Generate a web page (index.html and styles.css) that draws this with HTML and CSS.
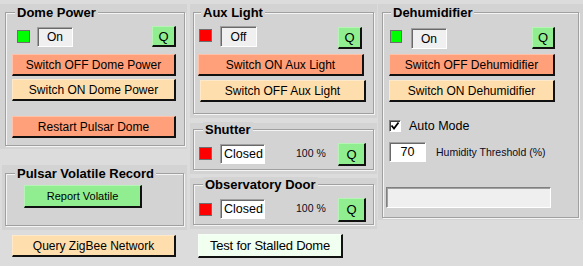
FILE: index.html
```html
<!DOCTYPE html>
<html lang="en">
<head>
    <meta charset="UTF-8">
    <title>Dome Control</title>
    <link rel="stylesheet" href="styles.css">
</head>
<body>
    <div class="form">

        <!-- coluna 1 -->
        <div class="col col-1">
            <div class="panel p-dome">
                <div class="group g-dome">
                    <span class="title">Dome Power</span>
                    <div class="row">
                        <span class="led on"></span>
                        <span class="status">On</span>
                        <button class="btn green q">Q</button>
                    </div>
                    <button class="btn salmon b1">Switch OFF Dome Power</button>
                    <button class="btn navajo b2">Switch ON Dome Power</button>
                    <button class="btn salmon b3">Restart Pulsar Dome</button>
                </div>
            </div>
            <div class="panel p-pulsar">
                <div class="group g-pulsar">
                    <span class="title">Pulsar Volatile Record</span>
                    <button class="btn green report">Report Volatile</button>
                </div>
            </div>
            <button class="btn navajo query">Query ZigBee Network</button>
        </div>

        <!-- coluna 2 -->
        <div class="col col-2">
            <div class="panel p-aux">
                <div class="group g-aux">
                    <span class="title">Aux Light</span>
                    <div class="row">
                        <span class="led off"></span>
                        <span class="status">Off</span>
                        <button class="btn green q">Q</button>
                    </div>
                    <button class="btn salmon b1">Switch ON Aux Light</button>
                    <button class="btn navajo b2">Switch OFF Aux Light</button>
                </div>
            </div>
            <div class="panel p-small">
                <div class="group g-small g-shutter">
                    <span class="title">Shutter</span>
                    <div class="row">
                        <span class="led off"></span>
                        <span class="status closed">Closed</span>
                        <span class="pct">100 %</span>
                        <button class="btn green q">Q</button>
                    </div>
                </div>
            </div>
            <div class="panel p-small p-door">
                <div class="group g-small g-door">
                    <span class="title">Observatory Door</span>
                    <div class="row">
                        <span class="led off"></span>
                        <span class="status closed">Closed</span>
                        <span class="pct">100 %</span>
                        <button class="btn green q">Q</button>
                    </div>
                </div>
            </div>
            <button class="btn honeydew stalled">Test for Stalled Dome</button>
        </div>

        <!-- coluna 3 -->
        <div class="col col-3">
            <div class="panel p-dehum">
                <div class="group g-dehum">
                    <span class="title">Dehumidifier</span>
                    <div class="row">
                        <span class="led on"></span>
                        <span class="status">On</span>
                        <button class="btn green q">Q</button>
                    </div>
                    <button class="btn salmon b1">Switch OFF Dehumidifier</button>
                    <button class="btn navajo b2">Switch ON Dehumidifier</button>
                    <label class="check-row">
                        <span class="checkbox">
                            <svg width="10" height="10" viewBox="0 0 10 10"><polyline points="1.5,4.5 4,7.5 8.5,1.5" fill="none" stroke="#000" stroke-width="1.8"/></svg>
                        </span>
                        Auto Mode
                    </label>
                    <div class="threshold-row">
                        <span class="status num">70</span>
                        <span class="small-label">Humidity Threshold (%)</span>
                    </div>
                    <div class="progress"></div>
                </div>
            </div>
        </div>

    </div>
</body>
</html>
```

FILE: styles.css
```css
/* --- form base --- */
body {
    margin: 0;
    background-color: #dcdcdc;
    font-family: "Liberation Sans", Arial, sans-serif;
    font-size: 12px;
    color: #000;
}

.form {
    display: flex;
    width: 583px;
    height: 266px;
    overflow: hidden;
}

.col {
    display: flex;
    flex-direction: column;
    align-items: flex-start;
    padding-top: 4px;
}

.col-1 { width: 187px; }
.col-2 { width: 187px; margin-left: 3px; }
.col-3 { width: 205px; margin-left: 1px; }

.panel {
    background-color: #d3d3d3;
    box-sizing: border-box;
}

/* groupbox */
.group {
    position: relative;
    box-sizing: border-box;
    border: 1px solid #a0a0a0;
    box-shadow: inset 1px 1px 0 #f4f4f4, 1px 1px 0 #f4f4f4;
}

.group .title {
    position: absolute;
    top: -8px;
    left: 8px;
    padding: 0 2px;
    background-color: #d3d3d3;
    font-size: 13px;
    font-weight: bold;
    line-height: 15px;
    white-space: nowrap;
}

.row {
    display: flex;
    align-items: flex-start;
}

/* leds e caixas de status */
.led {
    box-sizing: border-box;
    width: 13px;
    height: 13px;
    border: 1px solid #6e6e6e;
}
.led.on { background-color: #00ff00; }
.led.off { background-color: #ff0000; }

.status {
    box-sizing: border-box;
    display: flex;
    align-items: center;
    justify-content: center;
    width: 36px;
    height: 21px;
    background-color: #f0f0f0;
    border: 1px solid;
    border-color: #a0a0a0 #ffffff #ffffff #a0a0a0;
    box-shadow: inset 1px 1px 0 #696969;
    font-size: 12px;
}

.status.closed {
    justify-content: flex-start;
    padding-left: 3px;
    width: 45px;
    height: 20px;
    background-color: #ffffff;
    font-size: 12.5px;
}

/* botoes */
.btn {
    box-sizing: border-box;
    display: flex;
    align-items: center;
    justify-content: center;
    height: 22px;
    padding: 0;
    font-family: inherit;
    font-size: 12px;
    color: #000;
    border-style: solid;
    border-width: 1px 2px 2px 1px;
    border-color: rgba(255, 255, 255, 0.35) #111 #111 rgba(255, 255, 255, 0.35);
    white-space: nowrap;
}

.salmon { background-color: #ffa07a; }
.navajo { background-color: #ffdead; }
.green { background-color: #90ee90; }
.honeydew { background-color: #f0fff0; }

.btn.q {
    margin-left: auto;
    width: 24px;
    font-size: 13px;
}

/* Dome Power */
.p-dome {
    width: 187px;
    height: 145px;
    padding: 8px 0 0 5px;
}
.g-dome {
    width: 180px;
    height: 134px;
}
.g-dome .title { left: 9px; }
.g-dome .row {
    margin-top: 13px;
    padding: 0 8px 0 11px;
}
.g-dome .led { margin-top: 4px; }
.g-dome .status { margin-left: 7px; margin-top: 1px; height: 20px; }
.g-dome .q { height: 21px; }
.g-dome .btn.b1,
.g-dome .btn.b2,
.g-dome .btn.b3 {
    width: 164px;
    margin-left: 6px;
}
.g-dome .b1 { margin-top: 7px; }
.g-dome .b2 { margin-top: 3px; }
.g-dome .b3 { margin-top: 15px; }

/* Pulsar Volatile Record */
.p-pulsar {
    width: 185px;
    height: 65px;
    margin-top: 16px;
    margin-left: 2px;
    padding: 8px 0 0 3px;
}
.g-pulsar {
    width: 179px;
    height: 53px;
}
.g-pulsar .title { left: 9px; }
.btn.report {
    width: 118px;
    height: 23px;
    margin: 11px 0 0 18px;
    font-size: 11px;
}

.btn.query {
    width: 164px;
    margin: 5px 0 0 12px;
}

/* Aux Light */
.p-aux {
    width: 187px;
    height: 114px;
    padding: 8px 0 0 3px;
}
.g-aux {
    width: 181px;
    height: 102px;
}
.g-aux .title { left: 7px; }
.g-aux .row {
    margin-top: 13px;
    padding: 0 11px 0 5px;
}
.g-aux .led { margin-top: 3px; }
.g-aux .status { margin-left: 8px; width: 37px; }
.g-aux .q { margin-top: 1px; }
.g-aux .btn.b1,
.g-aux .btn.b2 { width: 166px; }
.g-aux .b1 { margin: 5px 0 0 4px; }
.g-aux .b2 { margin: 4px 0 0 6px; }

/* Shutter / Observatory Door */
.p-small {
    width: 187px;
    height: 51px;
    margin-top: 5px;
    padding: 6px 0 0 3px;
}
.p-door { margin-top: 4px; }
.g-small {
    width: 181px;
    height: 41px;
}
.g-small .title { left: 9px; }
.g-small .row {
    margin-top: 13px;
    padding: 0 7px 0 5px;
}
.g-small .led { margin-top: 4px; }
.g-small .status { margin-left: 8px; margin-top: 1px; }
.g-small .q { width: 28px; height: 23px; }
.g-door .led { margin-top: 5px; }
.g-door .q { height: 24px; }

.pct {
    margin-left: 31px;
    margin-top: 4px;
    font-size: 10.5px;
    color: #0a0a1e;
}

.btn.stalled {
    width: 145px;
    height: 24px;
    margin: 5px 0 0 8px;
    font-size: 13px;
    letter-spacing: -0.2px;
}

/* Dehumidifier */
.p-dehum {
    width: 205px;
    height: 216px;
    padding: 8px 0 0 4px;
}
.g-dehum {
    width: 197px;
    height: 206px;
}
.g-dehum .title { left: 8px; }
.g-dehum .row {
    margin-top: 14px;
    padding: 0 23px 0 7px;
}
.g-dehum .led { margin-top: 3px; width: 12px; }
.g-dehum .row .status { margin-left: 9px; margin-top: 1px; }
.g-dehum .q { width: 23px; }
.g-dehum .btn.b1,
.g-dehum .btn.b2 {
    width: 166px;
    margin-left: 6px;
}
.g-dehum .b1 { margin-top: 5px; }
.g-dehum .b2 { margin-top: 4px; }

.check-row {
    display: flex;
    align-items: center;
    gap: 8px;
    margin: 18px 0 0 6px;
    height: 12px;
    font-size: 12.5px;
}

.checkbox {
    box-sizing: border-box;
    display: flex;
    align-items: center;
    justify-content: center;
    width: 12px;
    height: 12px;
    background-color: #fff;
    border: 1px solid;
    border-color: #808080 #fff #fff #808080;
    box-shadow: inset 1px 1px 0 #404040;
}

.threshold-row {
    display: flex;
    align-items: center;
    margin: 10px 0 0 6px;
}

.status.num {
    width: 37px;
    height: 20px;
    background-color: #ffffff;
    font-size: 12.5px;
}

.small-label {
    margin-left: 10px;
    font-size: 10.5px;
    color: #0a0a1e;
}

.progress {
    box-sizing: border-box;
    width: 165px;
    height: 21px;
    margin: 25px 0 0 3px;
    background-color: #efefef;
    border: 1px solid;
    border-color: #808080 #fff #fff #808080;
    box-shadow: inset 1px 1px 0 #a0a0a0;
}
```
